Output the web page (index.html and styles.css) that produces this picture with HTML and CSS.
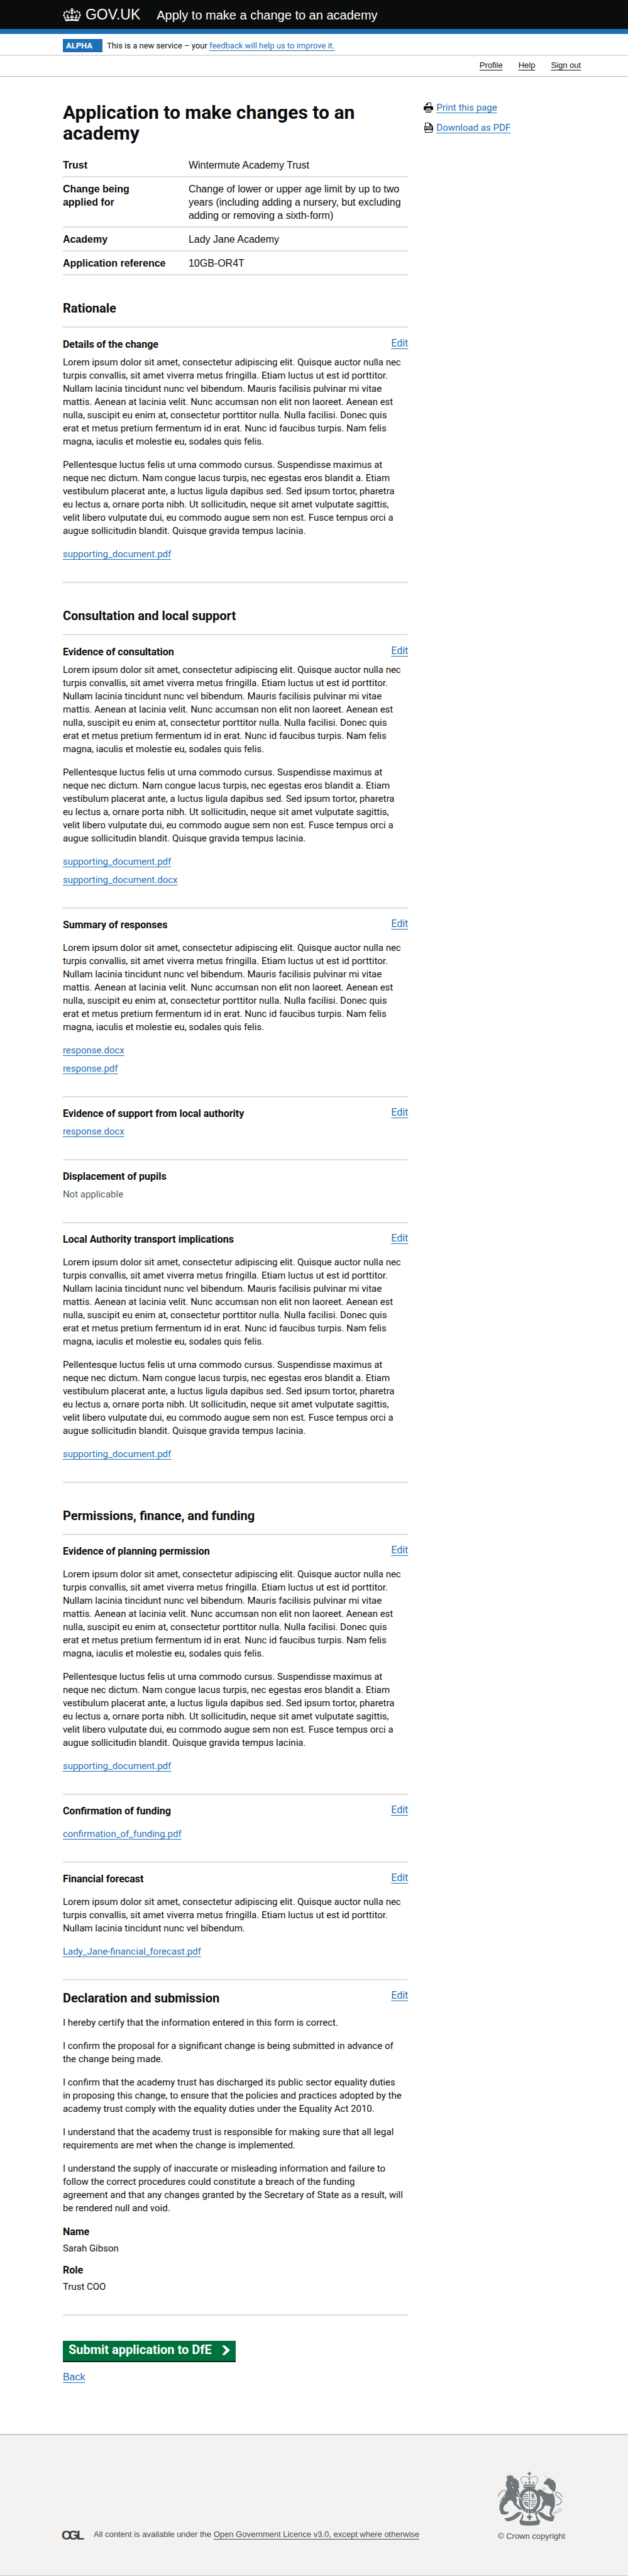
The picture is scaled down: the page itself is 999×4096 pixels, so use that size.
FILE: index.html
```html
<!DOCTYPE html>
<html lang="en">
<head>
<meta charset="utf-8">
<meta name="viewport" content="width=device-width, initial-scale=1">
<title>Apply to make a change to an academy</title>
<link rel="stylesheet" href="styles.css">
</head>
<body>
<header>
  <div class="masthead">
    <div class="brand">
      <svg class="crown" viewBox="0 0 132 97" aria-hidden="true"><path fill="currentColor" fill-rule="evenodd" d="M25 30.2c3.5 1.5 7.7-.2 9.1-3.7 1.5-3.6-.2-7.8-3.9-9.2-3.6-1.4-7.6.3-9.1 3.9-1.4 3.5.3 7.5 3.9 9zM9 39.5c3.6 1.5 7.8-.2 9.2-3.7 1.5-3.6-.2-7.8-3.9-9.1-3.6-1.5-7.6.2-9.1 3.8-1.4 3.5.3 7.5 3.8 9zM4.4 57.2c3.5 1.5 7.7-.2 9.1-3.8 1.5-3.6-.2-7.7-3.9-9.1-3.5-1.5-7.6.3-9.1 3.8-1.4 3.5.3 7.6 3.9 9.1zm38.3-21.4c3.5 1.5 7.7-.2 9.1-3.8 1.5-3.6-.2-7.7-3.9-9.1-3.6-1.5-7.6.3-9.1 3.8-1.3 3.6.4 7.7 3.9 9.1zm64.4-5.6c-3.6 1.5-7.8-.2-9.1-3.7-1.5-3.6.2-7.8 3.8-9.2 3.6-1.4 7.7.3 9.2 3.9 1.3 3.5-.4 7.5-3.9 9zm15.9 9.3c-3.6 1.5-7.7-.2-9.1-3.7-1.5-3.6.2-7.8 3.7-9.1 3.6-1.5 7.7.2 9.2 3.8 1.5 3.5-.3 7.5-3.8 9zm4.7 17.7c-3.6 1.5-7.8-.2-9.2-3.8-1.5-3.6.2-7.7 3.9-9.1 3.6-1.5 7.7.3 9.2 3.8 1.3 3.5-.4 7.6-3.9 9.1zM89.3 35.8c-3.6 1.5-7.8-.2-9.2-3.8-1.4-3.6.2-7.7 3.9-9.1 3.6-1.5 7.7.3 9.2 3.8 1.4 3.6-.3 7.7-3.9 9.1zM69.7 17.7l8.9 4.7V9.3l-8.9 2.8c-.2-.3-.5-.6-.9-.9L72.4 0H59.6l3.5 11.2c-.3.3-.6.5-.9.9l-8.8-2.8v13.1l8.8-4.7c.3.3.6.7.9.9l-5 15.4v.1c-.2.8-.4 1.6-.4 2.4 0 4.1 3.1 7.5 7 8.1h.2c.3 0 .7.1 1 .1.4 0 .7 0 1-.1h.2c4-.6 7.1-4.1 7.1-8.1 0-.8-.1-1.7-.4-2.4V34l-5.1-15.4c.4-.2.7-.6 1-.9zM66 92.8c16.9 0 32.8 1.1 47.1 3.2 4-16.9 8.9-26.7 14-33.5l-9.6-3.4c1 4.9 1.1 7.2 0 10.2-1.5-1.4-3-4.3-4.2-8.7L108.6 76c2.8-2 5-3.2 7.5-3.3-4.4 9.4-10 11.9-13.6 11.2-4.3-.8-6.3-4.6-5.6-7.9 1-4.7 5.7-5.9 8-.5 4.3-8.7-3-11.4-7.6-8.8 7.1-7.2 7.9-13.5 2.1-21.1-8 6.1-8.1 12.3-4.5 20.8-4.7-5.4-12.1-2.5-9.5 6.2 3.4-5.2 7.9-2 7.2 3.1-.6 4.3-6.4 7.8-13.5 7.2-10.3-.9-10.9-8-11.2-13.8 2.5-.5 7.1 1.8 11 7.3L80.2 60c-4.1 4.4-8 5.3-12.3 5.4 1.4-4.4 8-11.6 8-11.6H55.5s6.4 7.2 7.9 11.6c-4.2-.1-8-1-12.3-5.4l1.4 16.4c3.9-5.5 8.5-7.7 10.9-7.3-.3 5.8-.9 12.8-11.1 13.8-7.2.6-12.9-2.9-13.5-7.2-.7-5 3.8-8.3 7.1-3.1 2.7-8.7-4.6-11.6-9.4-6.2 3.7-8.5 3.6-14.7-4.6-20.8-5.8 7.6-5 13.9 2.2 21.1-4.7-2.6-11.9.1-7.7 8.8 2.3-5.5 7.1-4.2 8.1.5.7 3.3-1.3 7.1-5.7 7.9-3.5.7-9-1.8-13.5-11.2 2.5.1 4.7 1.3 7.5 3.3l-4.7-15.4c-1.2 4.4-2.7 7.2-4.3 8.7-1.1-3-.9-5.3 0-10.2l-9.5 3.4c5 6.9 9.9 16.7 14 33.5 14.8-2.1 30.8-3.2 47.7-3.2z"/></svg>
      <span class="brand-name">GOV.UK</span>
    </div>
    <span class="service-name">Apply to make a change to an academy</span>
  </div>
  <div class="phase">
    <strong class="tag">ALPHA</strong>
    <span>This is a new service – your <a class="link" href="#">feedback will help us to improve it.</a></span>
  </div>
  <nav class="account" aria-label="Account">
    <a href="#">Profile</a>
    <a href="#">Help</a>
    <a href="#">Sign out</a>
  </nav>
</header>

<div class="layout">
  <main>
    <h1>Application to make changes to an<br>academy</h1>
    <table class="summary">
      <tr><th scope="row">Trust</th><td>Wintermute Academy Trust</td></tr>
      <tr><th scope="row">Change being<br>applied for</th><td>Change of lower or upper age limit by up to two<br>years (including adding a nursery, but excluding<br>adding or removing a sixth-form)</td></tr>
      <tr><th scope="row">Academy</th><td>Lady Jane Academy</td></tr>
      <tr><th scope="row">Application reference</th><td>10GB-OR4T</td></tr>
    </table>

    <h2 class="part">Rationale</h2>
    <section class="item item-first item-tight">
      <div class="item-head"><h3>Details of the change</h3><a class="link" href="#">Edit</a></div>
      <p>Lorem ipsum dolor sit amet, consectetur adipiscing elit. Quisque auctor nulla nec<br>turpis convallis, sit amet viverra metus fringilla. Etiam luctus ut est id porttitor.<br>Nullam lacinia tincidunt nunc vel bibendum. Mauris facilisis pulvinar mi vitae<br>mattis. Aenean at lacinia velit. Nunc accumsan non elit non laoreet. Aenean est<br>nulla, suscipit eu enim at, consectetur porttitor nulla. Nulla facilisi. Donec quis<br>erat et metus pretium fermentum id in erat. Nunc id faucibus turpis. Nam felis<br>magna, iaculis et molestie eu, sodales quis felis.</p>
      <p>Pellentesque luctus felis ut urna commodo cursus. Suspendisse maximus at<br>neque nec dictum. Nam congue lacus turpis, nec egestas eros blandit a. Etiam<br>vestibulum placerat ante, a luctus ligula dapibus sed. Sed ipsum tortor, pharetra<br>eu lectus a, ornare porta nibh. Ut sollicitudin, neque sit amet vulputate sagittis,<br>velit libero vulputate dui, eu commodo augue sem non est. Fusce tempus orci a<br>augue sollicitudin blandit. Quisque gravida tempus lacinia.</p>
      <ul class="files"><li><a class="link" href="#">supporting_document.pdf</a></li></ul>
    </section>

    <h2 class="part">Consultation and local support</h2>
    <section class="item item-first item-tight">
      <div class="item-head"><h3>Evidence of consultation</h3><a class="link" href="#">Edit</a></div>
      <p>Lorem ipsum dolor sit amet, consectetur adipiscing elit. Quisque auctor nulla nec<br>turpis convallis, sit amet viverra metus fringilla. Etiam luctus ut est id porttitor.<br>Nullam lacinia tincidunt nunc vel bibendum. Mauris facilisis pulvinar mi vitae<br>mattis. Aenean at lacinia velit. Nunc accumsan non elit non laoreet. Aenean est<br>nulla, suscipit eu enim at, consectetur porttitor nulla. Nulla facilisi. Donec quis<br>erat et metus pretium fermentum id in erat. Nunc id faucibus turpis. Nam felis<br>magna, iaculis et molestie eu, sodales quis felis.</p>
      <p>Pellentesque luctus felis ut urna commodo cursus. Suspendisse maximus at<br>neque nec dictum. Nam congue lacus turpis, nec egestas eros blandit a. Etiam<br>vestibulum placerat ante, a luctus ligula dapibus sed. Sed ipsum tortor, pharetra<br>eu lectus a, ornare porta nibh. Ut sollicitudin, neque sit amet vulputate sagittis,<br>velit libero vulputate dui, eu commodo augue sem non est. Fusce tempus orci a<br>augue sollicitudin blandit. Quisque gravida tempus lacinia.</p>
      <ul class="files"><li><a class="link" href="#">supporting_document.pdf</a></li><li><a class="link" href="#">supporting_document.docx</a></li></ul>
    </section>
    <section class="item">
      <div class="item-head"><h3>Summary of responses</h3><a class="link" href="#">Edit</a></div>
      <p>Lorem ipsum dolor sit amet, consectetur adipiscing elit. Quisque auctor nulla nec<br>turpis convallis, sit amet viverra metus fringilla. Etiam luctus ut est id porttitor.<br>Nullam lacinia tincidunt nunc vel bibendum. Mauris facilisis pulvinar mi vitae<br>mattis. Aenean at lacinia velit. Nunc accumsan non elit non laoreet. Aenean est<br>nulla, suscipit eu enim at, consectetur porttitor nulla. Nulla facilisi. Donec quis<br>erat et metus pretium fermentum id in erat. Nunc id faucibus turpis. Nam felis<br>magna, iaculis et molestie eu, sodales quis felis.</p>
      <ul class="files"><li><a class="link" href="#">response.docx</a></li><li><a class="link" href="#">response.pdf</a></li></ul>
    </section>
    <section class="item item-tight">
      <div class="item-head"><h3>Evidence of support from local authority</h3><a class="link" href="#">Edit</a></div>
      <ul class="files"><li><a class="link" href="#">response.docx</a></li></ul>
    </section>
    <section class="item item-tight">
      <div class="item-head"><h3>Displacement of pupils</h3></div>
      <p class="muted">Not applicable</p>
    </section>
    <section class="item">
      <div class="item-head"><h3>Local Authority transport implications</h3><a class="link" href="#">Edit</a></div>
      <p>Lorem ipsum dolor sit amet, consectetur adipiscing elit. Quisque auctor nulla nec<br>turpis convallis, sit amet viverra metus fringilla. Etiam luctus ut est id porttitor.<br>Nullam lacinia tincidunt nunc vel bibendum. Mauris facilisis pulvinar mi vitae<br>mattis. Aenean at lacinia velit. Nunc accumsan non elit non laoreet. Aenean est<br>nulla, suscipit eu enim at, consectetur porttitor nulla. Nulla facilisi. Donec quis<br>erat et metus pretium fermentum id in erat. Nunc id faucibus turpis. Nam felis<br>magna, iaculis et molestie eu, sodales quis felis.</p>
      <p>Pellentesque luctus felis ut urna commodo cursus. Suspendisse maximus at<br>neque nec dictum. Nam congue lacus turpis, nec egestas eros blandit a. Etiam<br>vestibulum placerat ante, a luctus ligula dapibus sed. Sed ipsum tortor, pharetra<br>eu lectus a, ornare porta nibh. Ut sollicitudin, neque sit amet vulputate sagittis,<br>velit libero vulputate dui, eu commodo augue sem non est. Fusce tempus orci a<br>augue sollicitudin blandit. Quisque gravida tempus lacinia.</p>
      <ul class="files"><li><a class="link" href="#">supporting_document.pdf</a></li></ul>
    </section>

    <h2 class="part">Permissions, finance, and funding</h2>
    <section class="item">
      <div class="item-head"><h3>Evidence of planning permission</h3><a class="link" href="#">Edit</a></div>
      <p>Lorem ipsum dolor sit amet, consectetur adipiscing elit. Quisque auctor nulla nec<br>turpis convallis, sit amet viverra metus fringilla. Etiam luctus ut est id porttitor.<br>Nullam lacinia tincidunt nunc vel bibendum. Mauris facilisis pulvinar mi vitae<br>mattis. Aenean at lacinia velit. Nunc accumsan non elit non laoreet. Aenean est<br>nulla, suscipit eu enim at, consectetur porttitor nulla. Nulla facilisi. Donec quis<br>erat et metus pretium fermentum id in erat. Nunc id faucibus turpis. Nam felis<br>magna, iaculis et molestie eu, sodales quis felis.</p>
      <p>Pellentesque luctus felis ut urna commodo cursus. Suspendisse maximus at<br>neque nec dictum. Nam congue lacus turpis, nec egestas eros blandit a. Etiam<br>vestibulum placerat ante, a luctus ligula dapibus sed. Sed ipsum tortor, pharetra<br>eu lectus a, ornare porta nibh. Ut sollicitudin, neque sit amet vulputate sagittis,<br>velit libero vulputate dui, eu commodo augue sem non est. Fusce tempus orci a<br>augue sollicitudin blandit. Quisque gravida tempus lacinia.</p>
      <ul class="files"><li><a class="link" href="#">supporting_document.pdf</a></li></ul>
    </section>
    <section class="item">
      <div class="item-head"><h3>Confirmation of funding</h3><a class="link" href="#">Edit</a></div>
      <ul class="files"><li><a class="link" href="#">confirmation_of_funding.pdf</a></li></ul>
    </section>
    <section class="item">
      <div class="item-head"><h3>Financial forecast</h3><a class="link" href="#">Edit</a></div>
      <p>Lorem ipsum dolor sit amet, consectetur adipiscing elit. Quisque auctor nulla nec<br>turpis convallis, sit amet viverra metus fringilla. Etiam luctus ut est id porttitor.<br>Nullam lacinia tincidunt nunc vel bibendum.</p>
      <ul class="files"><li><a class="link" href="#">Lady_Jane-financial_forecast.pdf</a></li></ul>
    </section>
    <section class="item">
      <div class="item-head"><h2>Declaration and submission</h2><a class="link" href="#">Edit</a></div>
      <p>I hereby certify that the information entered in this form is correct.</p>
      <p>I confirm the proposal for a significant change is being submitted in advance of<br>the change being made.</p>
      <p>I confirm that the academy trust has discharged its public sector equality duties<br>in proposing this change, to ensure that the policies and practices adopted by the<br>academy trust comply with the equality duties under the Equality Act 2010.</p>
      <p>I understand that the academy trust is responsible for making sure that all legal<br>requirements are met when the change is implemented.</p>
      <p>I understand the supply of inaccurate or misleading information and failure to<br>follow the correct procedures could constitute a breach of the funding<br>agreement and that any changes granted by the Secretary of State as a result, will<br>be rendered null and void.</p>
      <dl class="signatory">
        <div><dt>Name</dt><dd>Sarah Gibson</dd></div>
        <div><dt>Role</dt><dd>Trust COO</dd></div>
      </dl>
    </section>

    <div class="actions">
      <button class="submit" type="submit">Submit application to DfE
        <svg class="chevron" viewBox="0 0 14 16" aria-hidden="true"><path fill="currentColor" d="M0 0h5l9 8-9 8H0l7-8z"/></svg>
      </button>
      <a class="link back" href="#">Back</a>
    </div>
  </main>

  <aside>
    <ul class="tools">
      <li>
        <svg class="tool-icon" viewBox="0 0 15 16" aria-hidden="true">
          <path fill="#fff" stroke="#0b0c0c" d="M3.500 7V3.500L6.500.500H11.500V7z"/>
          <path fill="#0b0c0c" d="M3 4h4V0L3 4zM1.500 6h12A1.500 1.500 0 0 1 15 7.500V12H0V7.500A1.500 1.500 0 0 1 1.500 6z"/>
          <path fill="#fff" stroke="#0b0c0c" d="M3.500 9h8v6.500h-8z"/>
          <path stroke="#0b0c0c" d="M5 11.500h5M5 13.500h5"/>
        </svg>
        <a class="link" href="#">Print this page</a>
      </li>
      <li>
        <svg class="tool-icon" viewBox="0 0 15 16" aria-hidden="true">
          <path fill="#fff" stroke="#0b0c0c" d="M2.500.500h7l4 4v11h-11z"/>
          <path fill="#0b0c0c" d="M9 0v5h5zM1 6h14v6H1z"/>
          <text class="pdf-label" x="8" y="11" text-anchor="middle">PDF</text>
        </svg>
        <a class="link" href="#">Download as PDF</a>
      </li>
    </ul>
  </aside>
</div>

<footer>
  <div class="licence">
    <svg class="ogl" viewBox="-2 -5 42 24" role="img" aria-label="Open Government Licence">
      <text x="-1" y="15">O</text><text x="10" y="15">G</text><text x="23" y="15">L</text>
    </svg>
    <span>All content is available under the <a href="#">Open Government Licence v3.0, except where otherwise</a></span>
  </div>
  <div class="crown-copyright">
    <svg class="arms" viewBox="90 62 370 308" aria-hidden="true">
      <g fill="#6f777b">
        <!-- crown -->
        <path d="M266 63h8v6h6v7h-6v8h-8v-8h-6v-7h6zM236 138c22-5 46-5 68 0l2 8c-22-5-50-5-72 0zM236 149c22-4 46-4 68 0l-2 9c-20-4-44-4-64 0z"/>
        <path d="M250 136l-3-8-5 1 4-5-2-6 5 4 5-4-1 6 4 5-5-1zM271 136l-3-9-6 1 5-5-2-8 5 4 6-4-2 8 5 5-6-1zM293 136l-3-8-5 1 4-5-1-6 5 4 5-4-2 6 4 5-5-1z"/>
        <!-- garter and shield -->
        <path fill-rule="evenodd" d="M271 153c36 0 62 30 62 70s-26 72-62 72-61-32-61-72 25-70 61-70zm0 20c-24 0-42 22-42 52s18 53 42 53 43-23 43-53-19-52-43-52z"/>
        <path d="M269 174h4v50h40v4h-40v50h-4v-50h-40v-4h40z"/>
        <path d="M240 190h23v5h-26zM236 201h28v5h-30zM234 213h30v5h-31zM279 233h29v5h-29zM279 245h26v5h-26zM279 257h20v5h-20zM281 183l8 8 4-6 5 14-6-2 8 12 6 6-8-1-6-7-3 9-6 3 3-10-5-7 3-2z"/>
        <path d="M236 235h28v5h-28zM238 243l14 18h4l-8-20h4l7 22h5v-24h-3v12l-6-12z"/>
        <path d="M238 270c16 14 44 22 72 12l-4 12c-26 10-54 6-72-10z"/>
        <!-- lion -->
        <path d="M140 82l8 7 4-8 5 7 5-10 5 10 6-6 2 9 6-4-4 16-34 4zM146 106l14-5 32-1 8 10 10 8-4 6 8 10-6 4 6 14-8 4 4 16 4 18 10 12 10 14-4 10-8 4 2-8-10-12-14-6-8 0 8 18-4 22 12 12 12 14 8 2-4 8-14-2-14-16-16-14-4-14-12-10-16 6-6 14-14 10-8 18 6 14 12 6 10-4 4 8-10 10-22 2-12-6-6-18-4-14 2-20 10-14 6-20 14-10 6-24 8-18-4-16-6-8 6-12-8 2z"/>
        <!-- unicorn -->
        <path d="M345 71l32 32 10-6 4 8 16 6 12 16 2 20-4 26-14 10-6-16-10-8-12-20-20-6-4-6 10-12 12-14zM326 162l14 4 16 12 22 10 26-2 8 14 4 20 0 26-2 18-8 16-10 22 12 14 6-4-2 10-14 2-14-20 4-22 6-18-14-8-20-2-8 16-14 14-22 10-8 14h-8l6-16 22-14 14-16 0-20 8-14-8-22-14-6-6-10-8 14-6-2 2-16-10-4 8-4z"/>
        <!-- ribbon and base -->
        <path d="M127 328c24 0 44-8 62-24 12-12 24-14 38-8l-16 20c-14 14-36 26-58 29l-14-1zM414 320c-24 4-46-4-60-16-12-12-26-14-38-8l16 20c14 14 34 26 58 29h14z"/>
        <path d="M216 336c32 11 78 11 110 0l6 7-6 21c-32 8-78 8-108 0l-4-21zM225 296c10 16 0 24-6 40l8 4c8-14 16-30-2-44zM317 296c-10 16 0 24 6 40l-8 4c-8-14-16-30 2-44zM268 302h5l1 8 6 6 8 2-5 8-8 2 3 5-7 8-7-8 3-5-8-2-5-8 8-2 6-6z"/>
      </g>
      <g fill="none" stroke="#6f777b" stroke-width="4">
        <path stroke-dasharray="5 2" d="M236 134c-22-22-18-44 6-44 14 0 24 6 28 20 4-14 14-20 28-20 24 0 28 22 6 44M270 86v40"/>
        <path d="M124 240c-16 12-24-2-16-16 12-18 30-30 28-48-2-12-14-12-22-4-10 6-14 14-24 32M422 252c28-2 38-22 26-34-14-14-32-18-26-36 6-12 22 0 36 24"/>
        <path stroke-width="2" d="M413 305a6 6 0 1 0 0-12 6 6 0 0 0 0 12zM428 297a6 6 0 1 0 0-12 6 6 0 0 0 0 12zM445 287a7 7 0 1 0 0-15 7 7 0 0 0 0 15zM394 286a6 6 0 1 0 0-12 6 6 0 0 0 0 12zM354 166a6 6 0 1 0 0-12 6 6 0 0 0 0 12zM347 219a6 6 0 1 0 0-12 6 6 0 0 0 0 12z"/>
      </g>
      <path fill="none" stroke="#f3f2f1" stroke-width="4" d="M198 180l28 44M364 158l44 18M246 278l4 10M264 284v12M288 286l-4 10M164 124l8 6M172 148l8 8"/>
    </svg>
    <span>© Crown copyright</span>
  </div>
</footer>
</body>
</html>
```
FILE: styles.css
```css
* { box-sizing: border-box; }

body {
  margin: 0;
  background: #fff;
  color: #0b0c0c;
  font-family: Roboto, "Liberation Sans", sans-serif;
  font-size: 15px;
  line-height: 21px;
}

h1, h2, h3, p, ul, dl, dd { margin: 0; padding: 0; }
ul { list-style: none; }

a {
  color: inherit;
  text-decoration: underline;
  text-decoration-thickness: 1px;
  text-decoration-skip-ink: none;
  text-underline-offset: 3px;
}
.link { color: #1d70b8; }

/* Header */
.masthead {
  display: flex;
  align-items: center;
  gap: 26px;
  min-height: 54px;
  padding: 0 10%;
  border-bottom: 8px solid #1d70b8;
  background: #0b0c0c;
  color: #fff;
  font-family: "Liberation Sans", Arial, sans-serif;
}
.brand { display: flex; align-items: center; gap: 7px; }
.crown { width: 29px; height: 21px; }
.brand-name { font-size: 23px; }
.service-name { font-size: 20px; padding-top: 2px; }

.phase {
  display: flex;
  align-items: center;
  gap: 7px;
  padding: 8px 10% 4px;
  border-bottom: 2px solid #dedede;
  font-size: 13px;
}
.tag {
  padding: 0 16px 0 5px;
  background: #1d70b8;
  color: #fff;
}

.account {
  display: flex;
  justify-content: flex-end;
  gap: 25px;
  padding: 6px 7.5% 8px;
  border-bottom: 1px solid #b8babb;
  font-family: "Liberation Sans", Arial, sans-serif;
  font-size: 13px;
  line-height: 18px;
}

/* Page body */
.layout {
  display: grid;
  grid-template-columns: minmax(0, 11fr) minmax(0, 5fr);
  gap: 25px;
  padding: 40px 7.5% 80px 10%;
}

h1 { font-size: 30px; line-height: 33px; margin-bottom: 16px; }
h2 { font-size: 20px; line-height: 26px; }
h3 { font-size: 16px; line-height: 21px; }

.summary {
  width: 100%;
  border-collapse: collapse;
  font-family: "Liberation Sans", Arial, sans-serif;
  font-size: 16px;
}
.summary th, .summary td {
  padding: 8px 0 7px;
  border-bottom: 2px solid #dedede;
  text-align: left;
  vertical-align: top;
}
.summary th { width: 200px; }

.part {
  padding: 39px 0 16px;
  border-bottom: 2px solid #dedede;
}

.item {
  display: flex;
  flex-direction: column;
  gap: 16px;
  padding: 15px 0 33px;
  border-bottom: 2px solid #dedede;
}
.item-first { padding-top: 16px; }
.item-head { display: flex; justify-content: space-between; }
.item-head .link { font-size: 16px; line-height: 18px; }
.item-tight .item-head { margin-bottom: -8px; }
.muted { color: #505a5f; }
.files { display: grid; gap: 8px; }

.signatory { display: grid; gap: 13px; }
.signatory dt { margin-bottom: 6px; font-size: 16px; font-weight: bold; }

.actions {
  display: flex;
  flex-direction: column;
  align-items: flex-start;
  gap: 13px;
  padding-top: 40px;
}
.submit {
  display: flex;
  align-items: center;
  gap: 16px;
  padding: 3px 9px;
  border: 0;
  border-bottom: 2px solid #002d18;
  background: #00703c;
  color: #fff;
  font: bold 20px/29px Roboto, "Liberation Sans", sans-serif;
  padding: 0 9px 3px;
}
.chevron { width: 13px; height: 16px; }
.back { font-family: "Liberation Sans", Arial, sans-serif; font-size: 16px; }

.tools { display: grid; gap: 14px; line-height: 18px; }
.tools li { display: flex; align-items: center; gap: 5px; }
.tool-icon { width: 15px; height: 16px; }
.pdf-label { font: bold 6px "Liberation Sans", sans-serif; fill: #fff; }

/* Footer */
footer {
  display: flex;
  align-items: flex-end;
  justify-content: space-between;
  padding: 58px 10% 53px 9.7%;
  border-top: 2px solid #c6c8c9;
  border-bottom: 1px solid #c6c8c9;
  background: #f3f2f1;
  color: #454a4d;
  font-family: "Liberation Sans", Arial, sans-serif;
  font-size: 13px;
  line-height: 18px;
}
.licence { display: flex; align-items: center; gap: 10px; }
.ogl { width: 42px; height: 24px; font-size: 20px; font-weight: bold; fill: #35393b; }
.crown-copyright { display: flex; flex-direction: column; gap: 8px; }
.arms { width: 103px; height: 86px; }
```
